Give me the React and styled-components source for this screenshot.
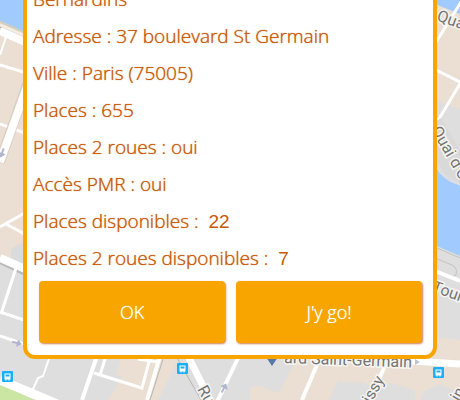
import React from 'react';
import styled, { createGlobalStyle } from 'styled-components';

const GlobalStyle = createGlobalStyle`
	body {
		margin: 0;
		background: #dedede;
		font-family: 'Open Sans', 'Noto Sans', sans-serif;
	}
`;

const Page = styled.main`
	position: relative;
	display: flex;
	flex-direction: column;
	justify-content: flex-end;
	box-sizing: border-box;
	height: 100vh;
	padding: 0 23px 41px;
	overflow: hidden;
`;

const MapCanvas = styled.svg`
	position: absolute;
	inset: 0;
	width: 100%;
	height: 100%;
`;

const Street = styled.text`
	fill: #747474;
	stroke: #f6f4f1;
	stroke-width: 3px;
	paint-order: stroke;
	font-family: Roboto, sans-serif;
	font-size: 16px;
`;

const Dialog = styled.section`
	position: relative;
	flex: none;
	padding-top: 12px;
	border: 4px solid #f8a500;
	border-radius: 12px;
	background: #fff;
`;

const Infos = styled.dl`
	margin: 0;
	padding: 0 6px;
	color: #c85a0a;
	font-size: 19px;
	font-weight: 300;
	line-height: 37px;
	text-shadow: 0 0 1px #c85a0a;
`;

const Info = styled.div`
	display: flex;
	gap: ${({ $live }) => ($live ? 10 : 5)}px;
	white-space: nowrap;
`;

const Label = styled.dt`
	margin: 0;
`;

const Value = styled.dd`
	margin: 0;
	font-family: ${({ $live }) => ($live ? "'Liberation Sans', sans-serif" : 'inherit')};
	text-shadow: ${({ $live }) => ($live ? 'none' : 'inherit')};
`;

const Actions = styled.div`
	display: flex;
	gap: 11px;
	padding: 4px 11px 12px 12px;
`;

const Button = styled.button`
	flex: 1;
	height: 62px;
	padding: 0;
	border: 0;
	border-radius: 4px;
	background: #f8a500;
	box-shadow: 1px 1px 2px rgba(190, 70, 10, 0.7);
	color: #fff;
	font-family: inherit;
	font-size: 18px;
	font-weight: 300;
	text-shadow: 0 0 1px #fff;
	cursor: pointer;
`;

const infos = [
	{ id: 1, value: 'Bernardins' },
	{ id: 2, label: 'Adresse :', value: '37 boulevard St Germain' },
	{ id: 3, label: 'Ville :', value: 'Paris (75005)' },
	{ id: 4, label: 'Places :', value: '655' },
	{ id: 5, label: 'Places 2 roues :', value: 'oui' },
	{ id: 6, label: 'Accès PMR :', value: 'oui' },
	{ id: 7, label: 'Places disponibles :', value: '22', live: true },
	{ id: 8, label: 'Places 2 roues disponibles :', value: '7', live: true }
];

const BusStop = ({ x, y }) => (
	<g transform={`translate(${x} ${y})`}>
		<rect width="11" height="11" rx="1" fill="#1bb0f5" />
		<path d="M2.5 2.5h6v6h-1v1h-1v-1h-2v1h-1v-1h-1z" fill="#fff" />
		<path d="M3.5 3.5h4v2h-4z" fill="#1bb0f5" />
	</g>
);

const Arrow = ({ x, y, angle }) => (
	<path
		d="M-5 -1H0V-4L5 0L0 4V1H-5Z"
		fill="#b3b7cd"
		transform={`translate(${x} ${y}) rotate(${angle})`}
	/>
);

const ParkingMap = () => (
	<MapCanvas viewBox="0 0 460 400" preserveAspectRatio="xMidYMid slice" aria-hidden="true">
		<rect width="460" height="400" fill="#dedede" />

		{/* rive gauche de la carte */}
		<path d="M0 0H30V275L0 260Z" fill="#eadfd2" />
		<path d="M11 250Q14 244 30 242V270L11 262Z" fill="#dadbdd" />
		<path d="M0 0H30V34L0 21Z" fill="#a1cbff" />
		<path d="M0 22L30 35" stroke="#d4cbbb" strokeWidth="2" />
		<path d="M0 25L30 38" stroke="#f2ede2" strokeWidth="3" />
		<path d="M0 27L30 40" stroke="#aaa79f" strokeWidth="1" />
		<path d="M0 31L30 44" stroke="#fff" strokeWidth="8" />
		<path d="M6 37L0 55" stroke="#fff" strokeWidth="2" />
		<path d="M0 65L30 74M0 124L30 135M0 227L30 210M6 224L30 237" stroke="#fff" strokeWidth="3" fill="none" />
		<path d="M30 76L0 162" stroke="#d8cec2" strokeWidth="10" />
		<path d="M30 78L0 162" stroke="#fff" strokeWidth="8" />
		<Arrow x={2} y={153} angle={110} />
		<path d="M0 261L30 275" stroke="#bababa" strokeWidth="6" />
		<path d="M0 258L30 271" stroke="#fff" strokeWidth="8" />
		<path d="M16 268L1 314M0 312L30 322M0 336L30 346" stroke="#fff" strokeWidth="3" fill="none" />
		<Arrow x={17} y={343} angle={15} />

		{/* bas de la carte */}
		<path d="M122 356H180L158 400H108L122 377L116 375Z" fill="#eadfd2" />
		<path d="M0 383L34 400H0Z" fill="#cbe6a3" />
		<path d="M0 380L62 406" stroke="#fff" strokeWidth="9" />
		<path d="M50 356L43 376L38 378L30 396" stroke="#fff" strokeWidth="2" fill="none" />
		<path d="M97 356L82 400M160 356L147 400" stroke="#fff" strokeWidth="4" />
		<path d="M106 356L100 375M94 373L142 388L150 358M138 359L158 362" stroke="#fff" strokeWidth="3" fill="none" />
		<path d="M164 356L150 400M176 356L201 400" stroke="#b9b5b0" strokeWidth="1" />
		<path d="M188 356L211 402" stroke="#fff" strokeWidth="7" />
		<path d="M239 356L217 402" stroke="#fff" strokeWidth="4" />
		<Arrow x={224} y={388} angle={-62} />
		<path d="M297 356H460V400H250V387L260 386L279 393Z" fill="#eadfd2" />
		<path d="M338 381L364 383L378 389L390 383L398 385L416 391H460V400H329Z" fill="#dedede" />
		<path d="M437 337L415 340V400H460V340Z" fill="#eadfd2" />
		<path d="M424 391L440 384L460 393V400H420Z" fill="#dedede" />
		<path d="M319 360L302 400M387 362L368 402" stroke="#fff" strokeWidth="4" />
		<path d="M410 361L460 364" stroke="#fff" strokeWidth="7" fill="none" />
		<path d="M266 357H278L272 366Z" fill="#5878aa" />
		<path d="M415 359L420 362L415 365Z" fill="#bfc2d5" />
		<Street x="284" y="363" transform="rotate(2 284 363)">ard Saint-Germain</Street>
		<Street x="197" y="389" transform="rotate(62 197 389)">Ru</Street>
		<Street x="371" y="404" transform="rotate(-61 371 404)">issy</Street>
		<Street x="459" y="402" transform="rotate(-60 459 402)">in</Street>
		<BusStop x={2} y={371} />
		<BusStop x={177} y={363} />
		<BusStop x={433} y={367} />

		{/* quais */}
		<path d="M430 0H460V109L430 98Z" fill="#eadfd2" />
		<path d="M430 0H460V14L430 2Z" fill="#a1cbff" />
		<path d="M461 2L430 52M434 69L462 83M461 82L430 134" stroke="#fff" strokeWidth="3" fill="none" />
		<path d="M430 150V125L441 118L460 150V183H450Z" fill="#d9d9d9" />
		<path d="M430 160L437 167Q443 180 460 185V256L430 243Z" fill="#a1cbff" />
		<path d="M430 161L437 166Q443 179 460 184" fill="none" stroke="#dcdfe0" strokeWidth="3" />
		<path d="M430 245L460 258M430 256L452 265Q458 268 456 275L450 278" fill="none" stroke="#c6c3b8" strokeWidth="1" />
		<path d="M430 269L460 281" stroke="#fff" strokeWidth="4" />
		<Street x="436" y="20" transform="rotate(20 436 20)">Qua</Street>
		<Street x="431" y="130" transform="rotate(60 431 130)">Quai d'O</Street>
		<Street x="431" y="291" transform="rotate(20 431 291)">Tour</Street>
	</MapCanvas>
);

const App = () => {
	const rows = infos.map((info) => (
		<Info key={info.id} $live={info.live}>
			{info.label && <Label>{info.label}</Label>}
			<Value $live={info.live}>{info.value}</Value>
		</Info>
	));

	return (
		<Page>
			<GlobalStyle />
			<ParkingMap />
			<Dialog role="dialog">
				<Infos>{rows}</Infos>
				<Actions>
					<Button type="button">OK</Button>
					<Button type="button">J'y go!</Button>
				</Actions>
			</Dialog>
		</Page>
	);
};

export default App;
